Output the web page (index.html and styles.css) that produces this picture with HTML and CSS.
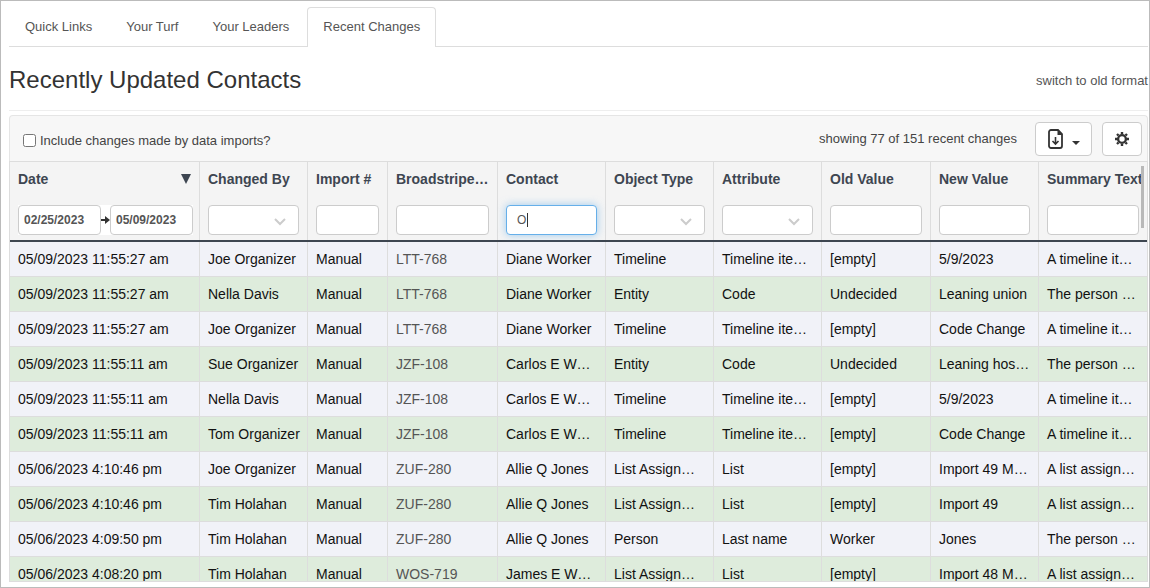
FILE: index.html
```
<!DOCTYPE html>
<html lang="en">
<head>
    <meta charset="UTF-8">
    <meta name="viewport" content="width=device-width, initial-scale=1.0">
    <title>Recent Changes</title>
    <link rel="stylesheet" href="styles.css">
</head>
<body>
    <div id="main">
        <nav class="tabs">
            <a href="#links">Quick Links</a>
            <a href="#turf">Your Turf</a>
            <a href="#leaders">Your Leaders</a>
            <a href="#changes" class="active">Recent Changes</a>
        </nav>
        <div class="heading">
            <h1>Recently Updated Contacts</h1>
            <a href="#old">switch to old format</a>
        </div>
        <div class="toolbar">
            <div class="include">
                <input type="checkbox" id="imports">
                <label for="imports">Include changes made by data imports?</label>
            </div>
            <span class="showing">showing 77 of 151 recent changes</span>
            <button class="download" aria-label="Download">
                <svg width="16" height="20" viewBox="0 0 16 20">
                    <path d="M3 1h7l4 4v12a2 2 0 0 1-2 2H3a2 2 0 0 1-2-2V3a2 2 0 0 1 2-2z" fill="none" stroke="#333" stroke-width="1.8"/>
                    <path d="M9.5 1v5H14.500z" fill="#333"/>
                    <path d="M7.500 8v7M4.500 12l3 3 3-3" fill="none" stroke="#333" stroke-width="1.6"/>
                </svg>
                <span class="caret"></span>
            </button>
            <button class="settings" aria-label="Settings">
                <svg width="14" height="14" viewBox="0 0 14 14">
                    <circle cx="7" cy="7" r="3.9" fill="none" stroke="#333" stroke-width="2.4"/>
                    <path d="M7 0v2M7 12v2M0 7h2M12 7h2M2 2l1.500 1.500M10.500 10.500L12 12M2 12l1.500-1.500M10.500 3.500L12 2" stroke="#333" stroke-width="2.4"/>
                </svg>
            </button>
        </div>
        <div class="grid">
            <table>
                <colgroup>
                    <col class="w-date"><col class="w-mid"><col class="w-import"><col class="w-code"><col class="w-mid">
                    <col class="w-mid"><col class="w-mid"><col class="w-wide"><col class="w-mid"><col class="w-mid">
                </colgroup>
                <thead>
                    <tr class="titles">
                        <th><div class="sorted">Date <svg width="10" height="10" viewBox="0 0 10 10"><path d="M0 0h10L5 10z" fill="#3e4651"/></svg></div></th>
                        <th>Changed By</th>
                        <th>Import #</th>
                        <th>Broadstripes ID</th>
                        <th>Contact</th>
                        <th>Object Type</th>
                        <th>Attribute</th>
                        <th>Old Value</th>
                        <th>New Value</th>
                        <th class="full">Summary Text</th>
                    </tr>
                    <tr class="filters">
                        <td>
                            <div class="range">
                                <input type="text" value="02/25/2023" aria-label="From date">
                                <svg width="9" height="8" viewBox="0 0 9 8"><path d="M0 4h6" stroke="#333" stroke-width="2"/><path d="M4 0L9 4 4 8z" fill="#333"/></svg>
                                <input type="text" value="05/09/2023" aria-label="To date">
                            </div>
                        </td>
                        <td><select aria-label="Changed By"><option></option></select></td>
                        <td><input type="text" aria-label="Import #"></td>
                        <td><input type="text" aria-label="Broadstripes ID"></td>
                        <td><input type="text" id="contact" value="O" aria-label="Contact"></td>
                        <td><select aria-label="Object Type"><option></option></select></td>
                        <td><select aria-label="Attribute"><option></option></select></td>
                        <td><input type="text" aria-label="Old Value"></td>
                        <td><input type="text" aria-label="New Value"></td>
                        <td><input type="text" aria-label="Summary Text"></td>
                    </tr>
                </thead>
                <tbody>
                    <tr>
                        <td>05/09/2023 11:55:27 am</td><td>Joe Organizer</td><td>Manual</td><td><a href="#c">LTT-768</a></td><td>Diane Worker</td>
                        <td>Timeline</td><td>Timeline item text</td><td>[empty]</td><td>5/9/2023</td><td>A timeline item was added</td>
                    </tr>
                    <tr>
                        <td>05/09/2023 11:55:27 am</td><td>Nella Davis</td><td>Manual</td><td><a href="#c">LTT-768</a></td><td>Diane Worker</td>
                        <td>Entity</td><td>Code</td><td>Undecided</td><td>Leaning union</td><td>The person was changed</td>
                    </tr>
                    <tr>
                        <td>05/09/2023 11:55:27 am</td><td>Joe Organizer</td><td>Manual</td><td><a href="#c">LTT-768</a></td><td>Diane Worker</td>
                        <td>Timeline</td><td>Timeline item text</td><td>[empty]</td><td>Code Change</td><td>A timeline item was added</td>
                    </tr>
                    <tr>
                        <td>05/09/2023 11:55:11 am</td><td>Sue Organizer</td><td>Manual</td><td><a href="#c">JZF-108</a></td><td>Carlos E Worker</td>
                        <td>Entity</td><td>Code</td><td>Undecided</td><td>Leaning hostile</td><td>The person was changed</td>
                    </tr>
                    <tr>
                        <td>05/09/2023 11:55:11 am</td><td>Nella Davis</td><td>Manual</td><td><a href="#c">JZF-108</a></td><td>Carlos E Worker</td>
                        <td>Timeline</td><td>Timeline item text</td><td>[empty]</td><td>5/9/2023</td><td>A timeline item was added</td>
                    </tr>
                    <tr>
                        <td>05/09/2023 11:55:11 am</td><td>Tom Organizer</td><td>Manual</td><td><a href="#c">JZF-108</a></td><td>Carlos E Worker</td>
                        <td>Timeline</td><td>Timeline item text</td><td>[empty]</td><td>Code Change</td><td>A timeline item was added</td>
                    </tr>
                    <tr>
                        <td>05/06/2023 4:10:46 pm</td><td>Joe Organizer</td><td>Manual</td><td><a href="#c">ZUF-280</a></td><td>Allie Q Jones</td>
                        <td>List Assignment</td><td>List</td><td>[empty]</td><td>Import 49 Members</td><td>A list assignment was added</td>
                    </tr>
                    <tr>
                        <td>05/06/2023 4:10:46 pm</td><td>Tim Holahan</td><td>Manual</td><td><a href="#c">ZUF-280</a></td><td>Allie Q Jones</td>
                        <td>List Assignment</td><td>List</td><td>[empty]</td><td>Import 49</td><td>A list assignment was added</td>
                    </tr>
                    <tr>
                        <td>05/06/2023 4:09:50 pm</td><td>Tim Holahan</td><td>Manual</td><td><a href="#c">ZUF-280</a></td><td>Allie Q Jones</td>
                        <td>Person</td><td>Last name</td><td>Worker</td><td>Jones</td><td>The person was changed</td>
                    </tr>
                    <tr>
                        <td>05/06/2023 4:08:20 pm</td><td>Tim Holahan</td><td>Manual</td><td><a href="#c">WOS-719</a></td><td>James E Worker</td>
                        <td>List Assignment</td><td>List</td><td>[empty]</td><td>Import 48 Members</td><td>A list assignment was added</td>
                    </tr>
                </tbody>
            </table>
            <div class="thumb"></div>
        </div>
    </div>
    <script>
        let contact = document.getElementById('contact');
        contact.focus();
        contact.setSelectionRange(1, 1);
    </script>
</body>
</html>
```
FILE: styles.css
```
*{
    margin: 0;
    padding: 0;
    box-sizing: border-box;
}
body{
    font-family: "Liberation Sans", Arial, sans-serif;
    font-size: 13px;
    color: #555;
    background-color: white;
}
a{
    color: #555;
    text-decoration: none;
}
#main{
    display: flex;
    flex-direction: column;
    height: 100vh;
    padding: 6px 1px 5px 8px;
    border: 1px solid #bbb;
    overflow: hidden;
}
.tabs{
    display: flex;
    flex-shrink: 0;
    gap: 2px;
    border-bottom: 1px solid #ddd;
}
.tabs a{
    padding: 0 15px;
    line-height: 38px;
    border: 1px solid transparent;
    border-bottom: none;
    border-radius: 4px 4px 0 0;
}
.tabs .active{
    margin-bottom: -1px;
    padding-bottom: 1px;
    border-color: #ddd;
    background-color: white;
}
.heading{
    display: flex;
    flex-shrink: 0;
    justify-content: space-between;
    align-items: center;
    height: 64px;
    padding-top: 3px;
    border-bottom: 1px solid #eee;
}
h1{
    font-size: 24px;
    font-weight: normal;
    color: #333;
}
.toolbar{
    display: flex;
    flex-shrink: 0;
    align-items: center;
    gap: 10px;
    height: 46px;
    margin-top: 4px;
    padding: 1px 5px 0 13px;
    border: 1px solid #e5e5e5;
    border-bottom: none;
    border-radius: 4px 4px 0 0;
    background-color: #f7f7f7;
    color: #444;
}
.include{
    display: flex;
    flex: 1;
    align-items: center;
    gap: 4px;
    padding-top: 3px;
}
.include input{
    width: 13px;
    height: 13px;
}
.showing{
    margin-right: 8px;
    padding-bottom: 2px;
}
.toolbar button{
    display: flex;
    align-items: center;
    justify-content: center;
    height: 34px;
    border: 1px solid #ccc;
    border-radius: 4px;
    background-color: white;
}
.toolbar .download{
    gap: 8px;
    width: 57px;
}
.toolbar .settings{
    width: 40px;
}
.caret{
    margin-top: 8px;
    border: 4px solid transparent;
    border-top-color: #333;
    border-bottom: none;
}
.grid{
    position: relative;
    flex: 1;
    min-height: 0;
    overflow: hidden;
    border: 1px solid #ddd;
}
table{
    width: 100%;
    table-layout: fixed;
    border-collapse: separate;
    border-spacing: 0;
    font-size: 14px;
    color: #111;
}
.w-date{ width: 190px; }
.w-mid{ width: 108px; }
.w-import{ width: 80px; }
.w-code{ width: 110px; }
.w-wide{ width: 109px; }
th, td{
    padding: 0 8px;
    border-right: 1px solid #ddd;
    text-align: left;
    white-space: nowrap;
    overflow: hidden;
    text-overflow: ellipsis;
}
th:last-child, td:last-child{
    border-right: none;
}
thead{
    background-color: #f4f4f4;
    color: #3e4651;
}
.titles th{
    height: 34px;
}
th.full{
    padding-right: 0;
    text-overflow: clip;
}
.sorted{
    display: flex;
    justify-content: space-between;
    align-items: center;
}
.filters td{
    height: 46px;
    padding: 9px 8px 0;
    border-right: none;
    border-bottom: 2px solid #3e4651;
    overflow: visible;
    vertical-align: top;
}
/* shadow instead of a border so the dark line stays unbroken */
.filters td:not(:last-child){
    padding-right: 9px;
    box-shadow: inset -1px 0 #ddd;
}
.filters td:first-child{
    padding-right: 7px;
}
.filters input, .filters select{
    display: block;
    width: 100%;
    height: 30px;
    padding: 0 10px;
    border: 1px solid #ccc;
    border-radius: 4px;
    background-color: white;
    font-family: inherit;
    font-size: 12px;
    color: #555;
    outline: none;
}
.filters select{
    appearance: none;
    background-image: url("data:image/svg+xml,%3Csvg xmlns='http://www.w3.org/2000/svg' width='12' height='8'%3E%3Cpath d='M1 1l5 5 5-5' fill='none' stroke='%23ccc' stroke-width='2'/%3E%3C/svg%3E");
    background-repeat: no-repeat;
    background-position: right 12px top 12px;
}
.filters input:focus{
    border-color: #66afe9;
    box-shadow: 0 0 8px rgba(102, 175, 233, 0.6);
}
/* steady text cursor */
#contact{
    caret-color: transparent;
    background: linear-gradient(#333, #333) 20px center / 1px 14px no-repeat white;
}
.filters .range{
    display: flex;
    align-items: center;
    background-color: white;
}
.range svg{
    flex-shrink: 0;
}
.filters .range input{
    flex: 1;
    min-width: 0;
    padding: 0 5px;
    font-weight: bold;
}
tbody td{
    height: 35px;
    border-bottom: 1px solid #ddd;
    background-color: #f1f2f8;
}
tbody td:nth-child(2){
    padding-right: 2px;
}
tbody tr:nth-child(even) td{
    background-color: #deecdc;
}
.thumb{
    position: absolute;
    top: 4px;
    right: 3px;
    width: 3px;
    height: 62px;
    background-color: #b8b8b8;
}
```
